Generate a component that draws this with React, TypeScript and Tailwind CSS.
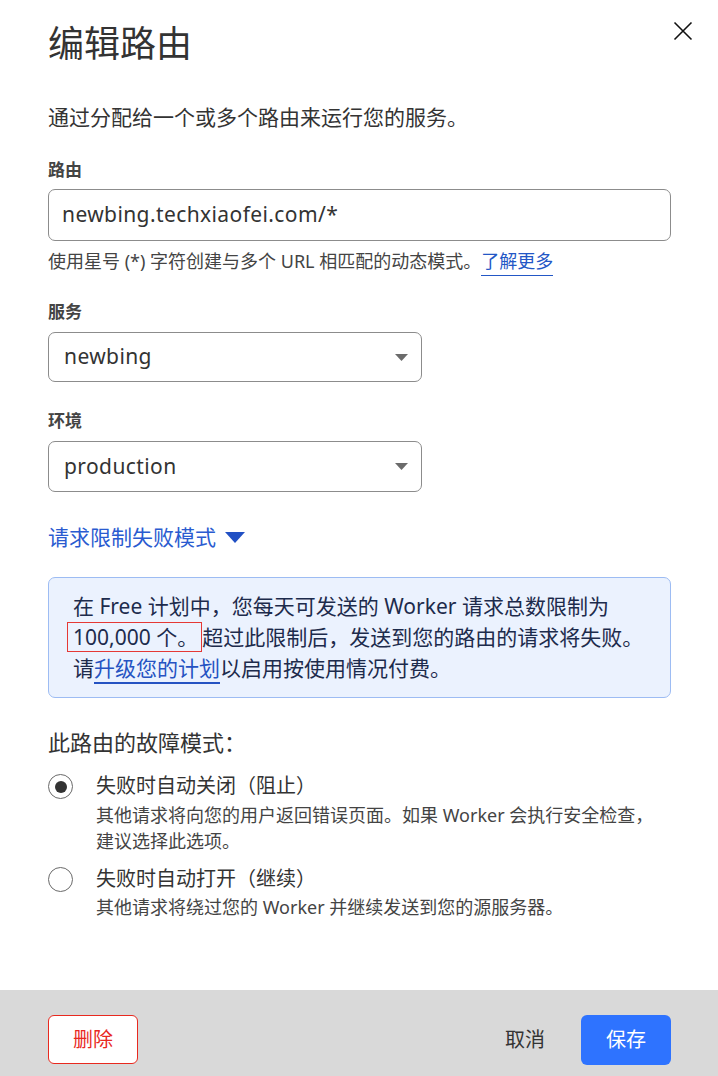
import React from "react";

const font = { fontFamily: '"Noto Sans", "Noto Sans CJK SC", sans-serif' };

function Caret() {
  return (
    <svg width="13" height="7" viewBox="0 0 13 7" className="shrink-0">
      <path d="M0 0 H13 L6.5 7 Z" fill="#6b6b6b" />
    </svg>
  );
}

function Radio({ checked }: { checked: boolean }) {
  return (
    <div className="w-[25px] h-[25px] rounded-full border-[1.5px] border-[#6a6a6a] bg-white flex items-center justify-center shrink-0">
      {checked && <div className="w-[12px] h-[12px] rounded-full bg-[#333]" />}
    </div>
  );
}

export default function App() {
  return (
    <div style={font} className="w-[718px] h-[1076px] bg-white flex flex-col text-[#333] overflow-hidden">
      <div className="flex-1 pl-[48px] pr-[47px] flex flex-col">
        <div className="flex items-start justify-between pt-[20px]">
          <h1 className="text-[36px] leading-[48px] text-[#333] font-normal">编辑路由</h1>
          <button className="mt-[1px] -mr-[22px]">
            <svg width="20" height="20" viewBox="0 0 20 20">
              <path d="M1.5 1.5 L18.5 18.5 M18.5 1.5 L1.5 18.5" stroke="#111" strokeWidth="1.6" />
            </svg>
          </button>
        </div>

        <p className="mt-[35px] text-[21px] leading-[28px] text-[#333]">通过分配给一个或多个路由来运行您的服务。</p>

        <div className="mt-[26px] text-[17px] leading-[26px] font-bold text-[#444]">路由</div>
        <div className="mt-[6px] h-[52px] rounded-[7px] border border-[#8c8c8c] flex items-center px-[13px] text-[21px] tracking-[0.4px] text-[#333]">
          newbing.techxiaofei.com/*
        </div>
        <div className="mt-[8px] text-[18px] leading-[24px] text-[#444]">
          使用星号 (*) 字符创建与多个 URL 相匹配的动态模式。
          <a className="text-[#2357c6] border-b border-[#2357c6] pb-[2px]">了解更多</a>
        </div>

        <div className="mt-[26px] text-[17px] leading-[26px] font-bold text-[#444]">服务</div>
        <div className="mt-[7px] w-[374px] h-[50px] rounded-[7px] border border-[#8c8c8c] flex items-center justify-between pl-[15px] pr-[13px] text-[21px] tracking-[0.4px] text-[#333]">
          <span>newbing</span>
          <Caret />
        </div>

        <div className="mt-[26px] text-[17px] leading-[26px] font-bold text-[#444]">环境</div>
        <div className="mt-[7px] w-[374px] h-[51px] rounded-[7px] border border-[#8c8c8c] flex items-center justify-between pl-[15px] pr-[13px] text-[21px] tracking-[0.4px] text-[#333]">
          <span>production</span>
          <Caret />
        </div>

        <div className="mt-[31px] flex items-center gap-[9px] text-[21px] leading-[28px] text-[#2a5bd0]">
          <span>请求限制失败模式</span>
          <svg width="20" height="11" viewBox="0 0 20 11">
            <path d="M0 0 H20 L10 11 Z" fill="#2150c4" />
          </svg>
        </div>

        <div className="mt-[26px] rounded-[7px] border border-[#9dbcf3] bg-[#ebf2fe] px-[24px] pt-[13px] pb-[13px] text-[21px] leading-[31px] text-[#1d2b4c]">
          <div>在 Free 计划中，您每天可发送的 Worker 请求总数限制为</div>
          <div>
            <span className="inline-block border border-[#e53935] -ml-[6px] pl-[5px] pr-[3px] leading-[28px]">100,000 个。</span>
            超过此限制后，发送到您的路由的请求将失败。
          </div>
          <div>
            请<span className="text-[#2553c2] border-b-2 border-[#2553c2]">升级您的计划</span>以启用按使用情况付费。
          </div>
        </div>

        <div className="mt-[29px] text-[22px] leading-[30px] text-[#333]">此路由的故障模式：</div>

        <div className="mt-[15px] flex gap-[23px]">
          <div className="pt-[2px]">
            <Radio checked />
          </div>
          <div>
            <div className="text-[20px] leading-[28px] text-[#333]">失败时自动关闭（阻止）</div>
            <div className="mt-[2px] text-[18px] leading-[26px] text-[#444]">
              其他请求将向您的用户返回错误页面。如果 Worker 会执行安全检查，
              <br />
              建议选择此选项。
            </div>
          </div>
        </div>

        <div className="mt-[11px] flex gap-[23px]">
          <div className="pt-[2px]">
            <Radio checked={false} />
          </div>
          <div>
            <div className="text-[20px] leading-[28px] text-[#333]">失败时自动打开（继续）</div>
            <div className="mt-[1px] text-[18px] leading-[26px] text-[#444]">
              其他请求将绕过您的 Worker 并继续发送到您的源服务器。
            </div>
          </div>
        </div>
      </div>

      <div className="h-[86px] bg-[#d9d9d9] pl-[48px] pr-[47px] pt-[25px] flex items-start justify-between">
        <button className="w-[90px] h-[49px] rounded-[6px] border-[1.5px] border-[#e8291f] bg-white text-[20px] text-[#e8291f]">
          删除
        </button>
        <div className="flex items-center gap-[36px]">
          <button className="text-[20px] text-[#333]">取消</button>
          <button className="w-[90px] h-[50px] rounded-[6px] bg-[#2e73ff] text-[20px] text-white">保存</button>
        </div>
      </div>
    </div>
  );
}
